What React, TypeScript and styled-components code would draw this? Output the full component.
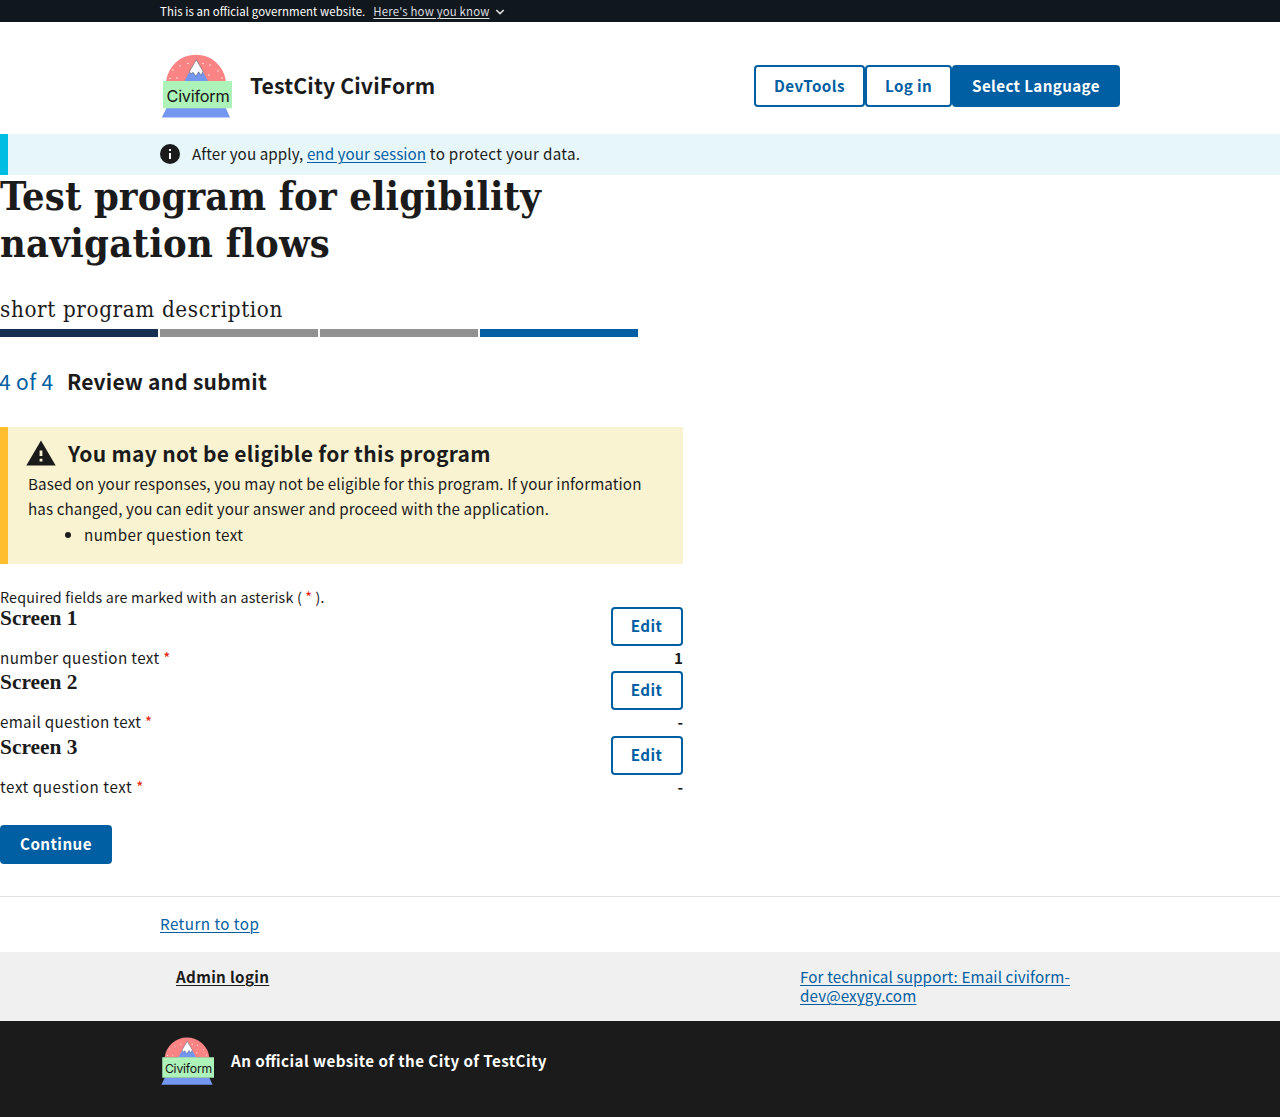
import React from "react";
import styled, { createGlobalStyle } from "styled-components";

const sans = `"Noto Sans CJK SC", "Noto Sans", sans-serif`;
const serif = `"DejaVu Serif Condensed", "DejaVu Serif", serif`;

const Global = createGlobalStyle`
  *, *::before, *::after { box-sizing: border-box; }
  body { margin: 0; background: #fff; color: #1b1b1b; font-family: ${sans}; font-size: 15.2px; }
  h1, h2, h3, p, ul { margin: 0; padding: 0; }
`;

const Fit = styled.span<{ $ls?: number; $liga?: boolean }>`
  letter-spacing: ${(p) => p.$ls ?? 0}px;
  font-feature-settings: ${(p) => (p.$liga ? '"liga" 1' : "normal")};
  white-space: nowrap;
`;

const Link = styled.a<{ $color?: string; $ls?: number; $wrap?: boolean }>`
  color: ${(p) => p.$color ?? "#005ea2"};
  letter-spacing: ${(p) => p.$ls ?? 0}px;
  text-decoration: underline;
  text-decoration-thickness: 1px;
  text-underline-offset: 2px;
  white-space: ${(p) => (p.$wrap ? "normal" : "nowrap")};
`;

const Container = styled.div`
  width: 960px;
  margin: 0 auto;
  display: flex;
  align-items: center;
`;

const Banner = styled.div`
  background: #11181d;
  color: #fff;
  height: 22px;
  font-size: 11.4px;
  line-height: 22px;
`;
const BannerInner = styled(Container)`
  gap: 8px;
  svg { margin: 2px 0 0 -4px; }
`;

const Header = styled.header`
  height: 112px;
  padding-top: 32px;
`;
const SiteTitle = styled.div`
  margin-left: 18px;
  padding-bottom: 2px;
  font-size: 21.2px;
  font-weight: 700;
  line-height: 28px;
`;
const HeaderButtons = styled.div`
  margin-left: auto;
  display: flex;
`;

const Button = styled.button<{ $w: number; $h: number; $solid?: boolean }>`
  width: ${(p) => p.$w}px;
  height: ${(p) => p.$h}px;
  padding: 0 0 2px;
  border: 0;
  border-radius: 4px;
  background: ${(p) => (p.$solid ? "#005ea2" : "transparent")};
  box-shadow: ${(p) => (p.$solid ? "none" : "inset 0 0 0 2px #005ea2")};
  color: ${(p) => (p.$solid ? "#fff" : "#005ea2")};
  font: 700 15.2px/16px ${sans};
  white-space: nowrap;
`;
const EditButton = styled(Button)`
  padding: 0 1px 3px 0;
`;

const SessionAlert = styled.div`
  height: 41px;
  background: #e7f6f8;
  border-left: 8px solid #00bde3;
  padding: 0 0 1px 152px;
  display: flex;
  align-items: center;
  gap: 12px;
  line-height: 22px;
`;
const AlertText = styled.div`
  padding-bottom: 2px;
`;

const Main = styled.main`
  width: 683px;
`;
const Title = styled.h1`
  height: 92px;
  font: 700 39.5px/47px ${serif};
  margin-top: -2px;
`;
const Description = styled.p`
  margin-top: 30px;
  height: 34px;
  font: 400 22.2px/29px ${serif};
  letter-spacing: 0.65px;
`;
const Progress = styled.div`
  display: flex;
  gap: 2px;
`;
const Segment = styled.div<{ $color: string }>`
  width: 158px;
  height: 8px;
  background: ${(p) => p.$color};
`;
const StepHeading = styled.h2`
  margin: 29px 0 0 -1px;
  height: 31px;
  display: flex;
  gap: 13.5px;
  font-size: 21px;
  line-height: 30px;
`;
const StepCount = styled.span`
  font-weight: 400;
  letter-spacing: 0.36px;
  color: #005ea2;
`;

const Warning = styled.section`
  margin-top: 30px;
  height: 137px;
  background: #faf3d1;
  border-left: 8px solid #ffbe2e;
  padding: 10px 20px 0;
  line-height: 25.4px;
`;
const WarningHead = styled.h3`
  display: flex;
  align-items: center;
  gap: 12px;
  margin: 0 0 2px -2px;
  font-size: 21px;
  line-height: 32px;
`;
const Reasons = styled.ul`
  padding-left: 56px;
`;

const RequiredNote = styled.p`
  margin-top: 23px;
  height: 20px;
  font-size: 14.3px;
  line-height: 20px;
`;
const Star = styled.span`
  color: #e52207;
`;

const Screen = styled.section`
  height: 64.4px;
`;
const ScreenRow = styled.div`
  display: flex;
  justify-content: space-between;
  align-items: flex-start;
`;
const ScreenName = styled.h3`
  font: 700 21.4px/22px "Liberation Serif", serif;
`;
const Answer = styled.div`
  display: flex;
  justify-content: space-between;
  line-height: 22px;
`;

const Actions = styled.div`
  height: 95.8px;
  padding-top: 24.8px;
`;

const ReturnBar = styled.div`
  height: 56px;
  border-top: 1px solid #dfe1e2;
  line-height: 53px;
`;
const FooterNav = styled.div`
  height: 69px;
  background: #f0f0f0;
  padding-top: 15px;
  line-height: 19px;
`;
const FooterCols = styled(Container)`
  align-items: flex-start;
  padding-left: 16px;
  justify-content: space-between;
`;
const Support = styled.div`
  width: 320px;
  padding-right: 16px;
`;
const Identifier = styled.footer`
  height: 96px;
  background: #1b1b1b;
  color: #fff;
  padding-top: 16px;
  font-weight: 700;
`;
const IdentifierText = styled.div`
  margin-left: 17px;
  padding-bottom: 2px;
  line-height: 24px;
`;

const stars = [[13, 16], [20, 12], [28, 9.5], [10, 24.5], [17, 24], [50, 11], [58, 17], [49, 21], [43, 9.5], [62, 24]];

function Logo({ width }: { width: number }) {
  return (
    <svg width={width} height={(width * 64) / 72} viewBox="0 0 72 64">
      <path d="M6.2 27.2A30 30 0 0 1 65.8 27.2Z" fill="#fa8383" />
      {stars.map(([x, y]) => (
        <circle key={`${x}-${y}`} cx={x} cy={y} r="0.8" fill="#fff" fillOpacity="0.8" />
      ))}
      <path d="M36.3 5.8 48.3 27.5H24.2Z" fill="#7396f0" />
      <path d="M36.3 5.8 43 17.2 41 21.3 38.6 17.8 36 22.3 33 18.2 31.2 20 29.4 17.6Z" fill="#fff" stroke="#4b4b55" strokeWidth="0.5" />
      <path d="M6.5 54h59.3L70 63.5H1.8Z" fill="#7396f0" />
      <rect x="3" y="27" width="69" height="27.3" fill="#adf2b8" />
      <text x="6.5" y="47.5" fontFamily="Inter, sans-serif" fontWeight="400" fontSize="16.3" textLength="63.2" fill="#151515">Civiform</text>
    </svg>
  );
}

const screens = [
  { name: "Screen 1", question: "number question text", ls: 0.38, answer: "1" },
  { name: "Screen 2", question: "email question text", ls: 0.32, answer: "-" },
  { name: "Screen 3", question: "text question text", ls: 0.55, answer: "-" },
];

export default function App() {
  return (
    <>
      <Global />
      <Banner>
        <BannerInner>
          <Fit $ls={0.09} $liga>This is an official government website.</Fit>
          <Link $color="#dcdee0" $ls={0.17}>Here's how you know</Link>
          <svg width="12" height="8" viewBox="0 0 12 8"><path d="M2.3 2 6 5.6 9.7 2" fill="none" stroke="#dcdee0" strokeWidth="1.6" /></svg>
        </BannerInner>
      </Banner>
      <Header>
        <Container>
          <Logo width={72} />
          <SiteTitle><Fit $ls={0.14}>TestCity CiviForm</Fit></SiteTitle>
          <HeaderButtons>
            <Button $w={111} $h={42}><Fit $ls={0.42}>DevTools</Fit></Button>
            <Button $w={87} $h={42}><Fit $ls={0.35}>Log in</Fit></Button>
            <Button $w={168} $h={42} $solid><Fit $ls={0.37}>Select Language</Fit></Button>
          </HeaderButtons>
        </Container>
      </Header>
      <SessionAlert>
        <svg width="20" height="20" viewBox="0 0 20 20"><circle cx="10" cy="10" r="10" fill="#1b1b1b" /><path d="M9 5h2v2H9zM9 9h2v6H9z" fill="#fff" /></svg>
        <AlertText>
          <Fit $ls={0.08}>After you apply, </Fit>
          <Link $ls={0.05}>end your session</Link>
          <Fit $ls={0.3}> to protect your data.</Fit>
        </AlertText>
      </SessionAlert>
      <Main>
        <Title><Fit $ls={0.12}>Test program for eligibility</Fit><br /><Fit $ls={0.27}>navigation flows</Fit></Title>
        <Description>short program description</Description>
        <Progress>
          <Segment $color="#162e51" />
          <Segment $color="#919191" />
          <Segment $color="#919191" />
          <Segment $color="#005ea2" />
        </Progress>
        <StepHeading><StepCount>4 of 4</StepCount><Fit $ls={0.2}>Review and submit</Fit></StepHeading>
        <Warning>
          <WarningHead>
            <svg width="30" height="26" viewBox="0 0 30 26"><path d="M15 .5 29.7 25.5H.3Z" fill="#1b1b1b" /><path d="M13.6 10.5h2.8v5.5h-2.8zM13.6 18.8h2.8v2.7h-2.8z" fill="#faf3d1" /></svg>
            <Fit $ls={0.3}>You may not be eligible for this program</Fit>
          </WarningHead>
          <p>
            <Fit $ls={0.1}>Based on your responses, you may not be eligible for this program. If your information</Fit>
            <br />
            <Fit $ls={0.09}>has changed, you can edit your answer and proceed with the application.</Fit>
          </p>
          <Reasons><li><Fit $ls={0.37}>number question text</Fit></li></Reasons>
        </Warning>
        <RequiredNote><Fit $ls={0.17}>Required fields are marked with an asterisk ( <Star>*</Star> ).</Fit></RequiredNote>
        {screens.map((s) => (
          <Screen key={s.name}>
            <ScreenRow>
              <ScreenName>{s.name}</ScreenName>
              <EditButton $w={72} $h={39}><Fit $ls={0.4}>Edit</Fit></EditButton>
            </ScreenRow>
            <Answer>
              <Fit $ls={s.ls}>{s.question} <Star>*</Star></Fit>
              <b>{s.answer}</b>
            </Answer>
          </Screen>
        ))}
        <Actions><Button $w={112} $h={39} $solid><Fit $ls={0.44}>Continue</Fit></Button></Actions>
      </Main>
      <ReturnBar><Container><Link $ls={0.45}>Return to top</Link></Container></ReturnBar>
      <FooterNav>
        <FooterCols>
          <b><Link $color="#1b1b1b" $ls={0.33}>Admin login</Link></b>
          <Support>
            <Link $ls={0.12} $wrap>For technical support: Email civiform-dev@exygy.com</Link>
          </Support>
        </FooterCols>
      </FooterNav>
      <Identifier>
        <Container>
          <Logo width={54} />
          <IdentifierText><Fit $ls={0.42} $liga>An official website of the City of TestCity</Fit></IdentifierText>
        </Container>
      </Identifier>
    </>
  );
}
